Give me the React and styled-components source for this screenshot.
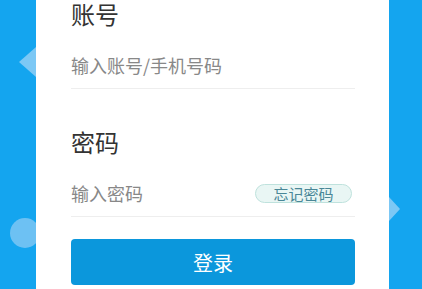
import React from "react";
import styled, { createGlobalStyle } from "styled-components";

const Global = createGlobalStyle`
  html, body { margin: 0; padding: 0; }
  body { background: #14a5ef; font-family: "Noto Sans CJK SC", "Noto Sans", sans-serif; }
`;

const Page = styled.div`
  position: relative;
  width: 422px;
  height: 289px;
  overflow: hidden;
  background: #14a5ef;
`;

const Triangle = styled.div`
  position: absolute;
  top: ${(p) => p.$top}px;
  left: ${(p) => p.$left}px;
  width: 0;
  height: 0;
  border-top: ${(p) => p.$h / 2}px solid transparent;
  border-bottom: ${(p) => p.$h / 2}px solid transparent;
  ${(p) => (p.$dir === "left" ? "border-right" : "border-left")}: ${(p) => p.$w}px solid #7cc8f5;
`;

const Circle = styled.div`
  position: absolute;
  left: 10px;
  top: 218px;
  width: 30px;
  height: 30px;
  border-radius: 50%;
  background: #6dc1f3;
`;

const Card = styled.div`
  position: relative;
  z-index: 1;
  margin-left: 36px;
  width: 353px;
  height: 289px;
  box-sizing: border-box;
  background: #fff;
  padding: 0 34px 0 35px;
  display: flex;
  flex-direction: column;
`;

const Label = styled.div`
  font-size: 24px;
  line-height: 28px;
  height: 28px;
  color: #333;
  margin-top: ${(p) => p.$mt || 0}px;
`;

const Field = styled.div`
  margin-top: 14px;
  height: 46px;
  display: flex;
  align-items: center;
  border-bottom: 1px solid #eeeeee;
  padding-right: 3px;
`;

const Input = styled.input`
  flex: 1;
  min-width: 0;
  border: none;
  outline: none;
  padding: 0;
  background: transparent;
  font-family: "Noto Sans CJK SC", "Noto Sans", sans-serif;
  font-size: 18px;
  color: #333;
  &::placeholder { color: #888888; }
`;

const Pill = styled.span`
  flex: none;
  width: 97px;
  height: 19px;
  box-sizing: border-box;
  border: 1px solid #bfe2dd;
  border-radius: 10px;
  background: #e9f6f4;
  color: #4a8797;
  font-size: 15px;
  line-height: 17px;
  text-align: center;
`;

const Button = styled.button`
  margin-top: 22px;
  height: 46px;
  border: none;
  border-radius: 4px;
  background: #0b97dc;
  color: #fff;
  font-family: "Noto Sans CJK SC", "Noto Sans", sans-serif;
  font-size: 20px;
  cursor: pointer;
`;

export default function App() {
  return (
    <>
      <Global />
      <Page>
        <Triangle $dir="left" $left={19} $top={47} $w={17} $h={31} />
        <Circle />
        <Triangle $dir="right" $left={389} $top={197} $w={11} $h={25} />
        <Card>
          <Label>账号</Label>
          <Field>
            <Input placeholder="输入账号/手机号码" />
          </Field>
          <Label $mt={39}>密码</Label>
          <Field>
            <Input type="password" placeholder="输入密码" />
            <Pill>忘记密码</Pill>
          </Field>
          <Button>登录</Button>
        </Card>
      </Page>
    </>
  );
}
